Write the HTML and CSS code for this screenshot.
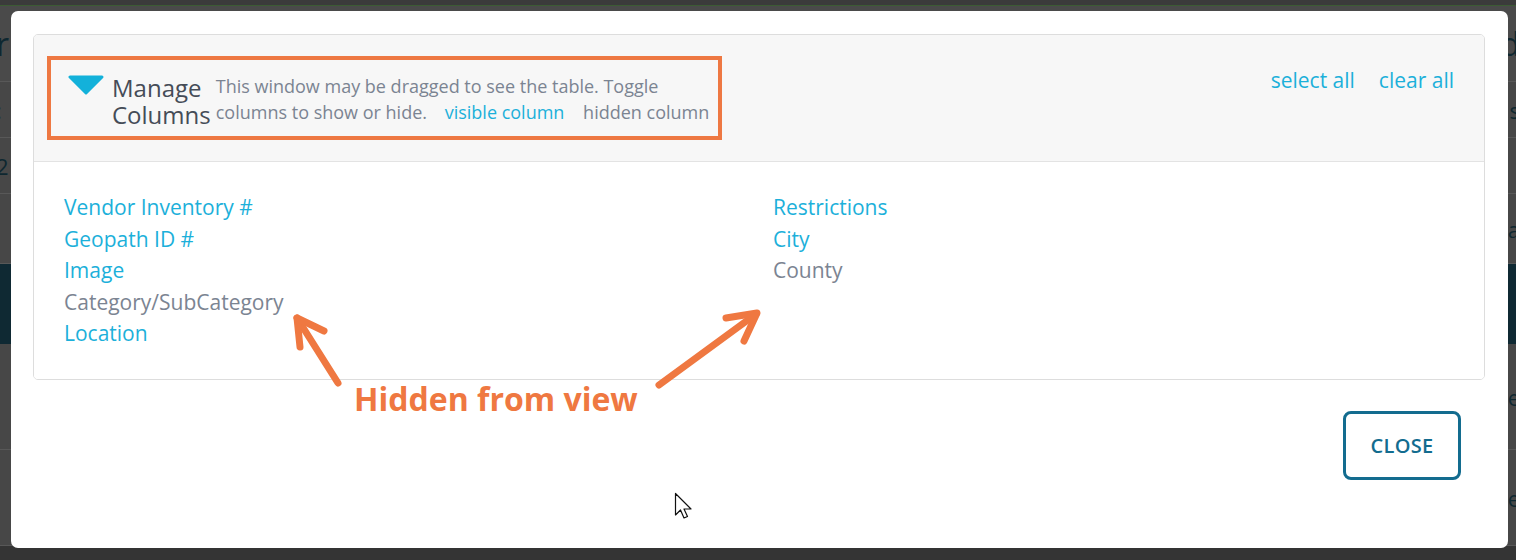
FILE: index.html
```html
<!DOCTYPE html>
<html>
<head>
<meta charset="utf-8">
<link rel="stylesheet" href="styles.css">
</head>
<body>
<div class="page">
  <div class="topbar"></div>
  <div class="prow prow-head"><span class="bg-l">r</span><span class="bg-r">d</span></div>
  <div class="prow prow-a"><span class="bg-l">:</span><span class="bg-r">s</span></div>
  <div class="prow prow-b"><span class="bg-l">2</span><span class="bg-r"></span></div>
  <div class="prow prow-c"><span class="bg-l"></span><span class="bg-r">a</span></div>
  <div class="band"></div>
  <div class="prow prow-d"><span class="bg-l"></span><span class="bg-r">e</span></div>
  <div class="prow prow-e"><span class="bg-l"></span><span class="bg-r">e</span></div>
  <div class="bottombar"></div>
</div>

<div class="modal">
  <div class="panel">
    <div class="panel-head">
      <div class="manage-box">
        <svg class="caret" width="36" height="20" viewBox="0 0 36 20"><polygon points="2,2 34,2 18,18" fill="#13b1da" stroke="#13b1da" stroke-width="3" stroke-linejoin="round"/></svg>
        <div class="manage-title">Manage<br>Columns</div>
        <div class="manage-desc">This window may be dragged to see the table. Toggle columns to show or hide. <span class="legend-visible">visible column</span> <span class="legend-hidden">hidden column</span></div>
      </div>
      <div class="head-links">
        <a class="head-link">select all</a>
        <a class="head-link">clear all</a>
      </div>
    </div>
    <div class="panel-body">
      <ul class="col-list">
        <li class="visible">Vendor Inventory #</li>
        <li class="visible">Geopath ID #</li>
        <li class="visible">Image</li>
        <li class="hidden">Category/SubCategory</li>
        <li class="visible">Location</li>
      </ul>
      <ul class="col-list">
        <li class="visible">Restrictions</li>
        <li class="visible">City</li>
        <li class="hidden">County</li>
      </ul>
    </div>
  </div>
  <div class="modal-footer">
    <button class="close-btn">CLOSE</button>
  </div>
</div>

<svg class="annot-arrows" width="1516" height="560" viewBox="0 0 1516 560">
  <g stroke="#ef7841" stroke-width="7" stroke-linecap="round" stroke-linejoin="round" fill="none">
    <path d="M338 383 L297 318"/>
    <path d="M300 347 L297 318 L324 331"/>
    <path d="M659 385 L756 314"/>
    <path d="M726 318 L757 313 L744 341"/>
  </g>
</svg>
<div class="annot-text">Hidden from view</div>

<svg class="cursor" width="20" height="28" viewBox="0 0 20 28">
  <path d="M1.5 1.5 L1.5 23 L6.5 18 L10 26 L13.5 24.5 L10 17 L17 17 Z" fill="#fff" stroke="#111" stroke-width="1.2" stroke-linejoin="round"/>
</svg>
</body>
</html>
```
FILE: styles.css
```css
* { box-sizing: border-box; }
html, body { margin: 0; padding: 0; }
body {
  width: 1516px;
  height: 560px;
  overflow: hidden;
  background: #474747;
  font-family: "Open Sans", "Liberation Sans", sans-serif;
  position: relative;
}
.page {
  display: flex;
  flex-direction: column;
  height: 560px;
}
.topbar {
  height: 6px;
  background: #3b3b3b;
  border-bottom: 1px solid #3c5b34;
}
.prow {
  display: flex;
  justify-content: space-between;
  align-items: center;
  border-bottom: 1px solid #585858;
  color: #0e2730;
  font-size: 32px;
  line-height: 1;
}
.prow-head { height: 76px; background: #4a4a4a; }
.prow-a { height: 56px; font-size: 22px; }
.prow-b { height: 56px; font-size: 22px; }
.prow-c { height: 70px; font-size: 22px; }
.band { height: 80px; background: #0f2933; }
.prow-d { height: 106px; font-size: 22px; }
.prow-e { height: 96px; font-size: 22px; }
.bottombar { flex: 1; background: #343434; }
.bg-l { margin-left: -4px; }
.bg-r { margin-right: -4px; }

.modal {
  position: absolute;
  left: 11px;
  top: 11px;
  width: 1497px;
  height: 537px;
  background: #fff;
  border-radius: 7px;
  padding: 23px 23px 0 22px;
  display: flex;
  flex-direction: column;
}
.panel {
  border: 1px solid #dddddd;
  border-radius: 5px;
  overflow: hidden;
}
.panel-head {
  background: #f7f7f7;
  border-bottom: 1px solid #e3e3e3;
  height: 127px;
  padding: 21px 30px 0 13px;
  display: flex;
  justify-content: space-between;
  align-items: flex-start;
}
.manage-box {
  border: 4px solid #ee7842;
  width: 675px;
  height: 84px;
  padding: 13px 2px 0 17px;
  display: flex;
  align-items: flex-start;
}
.caret {
  display: block;
  margin-top: 2px;
  flex: none;
}
.manage-title {
  margin-left: 8px;
  font-size: 24px;
  line-height: 27px;
  color: #454c57;
  margin-top: 1px;
  flex: none;
}
.manage-desc {
  margin-left: 5px;
  font-size: 18px;
  line-height: 26px;
  color: #7b8492;
  width: 500px;
  margin-top: 0;
}
.legend-visible { color: #1cb0da; margin-left: 13px; white-space: nowrap; }
.legend-hidden { color: #7b8492; margin-left: 14px; white-space: nowrap; }
.head-links {
  display: flex;
  gap: 24px;
  margin-top: 10px;
}
.head-link {
  font-size: 21px;
  line-height: 28px;
  color: #1cb0da;
  cursor: pointer;
}
.panel-body {
  display: grid;
  grid-template-columns: 709px 1fr;
  padding: 30px 30px 29px 30px;
  background: #fff;
}
.col-list {
  list-style: none;
  margin: 0;
  padding: 0;
  font-size: 21px;
  line-height: 31.5px;
}
.col-list .visible { color: #1cb0da; }
.col-list .hidden { color: #7b8492; }
.modal-footer {
  display: flex;
  justify-content: flex-end;
  padding-right: 24px;
  margin-top: 31px;
}
.close-btn {
  width: 118px;
  height: 69px;
  border: 3px solid #136c8f;
  border-radius: 8px;
  background: #fff;
  color: #136c8f;
  font-family: "Open Sans", "Liberation Sans", sans-serif;
  font-size: 20px;
  font-weight: 600;
  letter-spacing: 0.3px;
  padding: 0;
}
.annot-arrows {
  position: absolute;
  left: 0;
  top: 0;
  pointer-events: none;
}
.annot-text {
  position: absolute;
  left: 354px;
  top: 378px;
  font-size: 32px;
  line-height: 42px;
  font-weight: 700;
  color: #ef7841;
  white-space: nowrap;
}
.cursor {
  position: absolute;
  left: 674px;
  top: 492px;
}
```
